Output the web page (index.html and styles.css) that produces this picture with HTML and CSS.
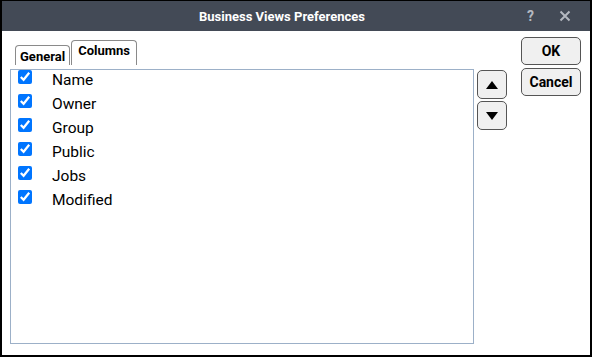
FILE: index.html
```html
<!DOCTYPE html>
<html>
<head>
<meta charset="utf-8">
<link rel="stylesheet" href="styles.css">
</head>
<body>
<div class="dialog">
  <div class="titlebar">
    <div></div>
    <div class="title">Business Views Preferences</div>
    <div class="title-actions">
      <span class="help">?</span>
      <svg class="close" width="12" height="12" viewBox="0 0 12 12"><path d="M1.5 1.5 L10.5 10.5 M10.5 1.5 L1.5 10.5" stroke="#b4b8c0" stroke-width="2" fill="none"/></svg>
    </div>
  </div>
  <div class="body">
    <div class="main">
      <div class="tabs">
        <div class="tab">General</div>
        <div class="tab active">Columns</div>
      </div>
      <div class="list">
        <label class="row"><input type="checkbox" checked><span>Name</span></label>
        <label class="row"><input type="checkbox" checked><span>Owner</span></label>
        <label class="row"><input type="checkbox" checked><span>Group</span></label>
        <label class="row"><input type="checkbox" checked><span>Public</span></label>
        <label class="row"><input type="checkbox" checked><span>Jobs</span></label>
        <label class="row"><input type="checkbox" checked><span>Modified</span></label>
      </div>
    </div>
    <div class="arrows">
      <button class="arrow"><svg width="14" height="10" viewBox="0 0 14 10"><path d="M7 1 L13 9 L1 9 Z" fill="#000"/></svg></button>
      <button class="arrow"><svg width="14" height="10" viewBox="0 0 14 10"><path d="M1 1 L13 1 L7 9 Z" fill="#000"/></svg></button>
    </div>
    <div class="actions">
      <button class="btn">OK</button>
      <button class="btn">Cancel</button>
    </div>
  </div>
</div>
</body>
</html>
```

FILE: styles.css
```css
* { box-sizing: border-box; }
html, body { margin: 0; padding: 0; background: #fff; }
body { font-family: Roboto, "Liberation Sans", Arial, sans-serif; }

.dialog {
  width: 592px;
  height: 357px;
  border: 2px solid #000;
  border-top-width: 1px;
  background: #fff;
  display: flex;
  flex-direction: column;
}

.titlebar {
  height: 30px;
  background: #434a56;
  display: grid;
  grid-template-columns: 1fr auto 1fr;
  align-items: center;
}
.title {
  color: #fff;
  font-weight: bold;
  font-size: 13px;
  padding-top: 1px;
  margin-right: 28px;
}
.title-actions {
  display: flex;
  justify-content: flex-end;
  align-items: center;
  gap: 25px;
  padding-right: 19px;
}
.help {
  color: #b4b8c0;
  font-weight: bold;
  font-size: 14px;
}

.body {
  flex: 1;
  display: flex;
  padding: 0 9px 0 8px;
}

.main {
  width: 464px;
  flex-shrink: 0;
  display: flex;
  flex-direction: column;
}
.tabs {
  display: flex;
  align-items: flex-end;
  padding-top: 9px;
  padding-left: 5px;
  gap: 1px;
  height: 34px;
}
.tab {
  border: 1px solid #8a8a8a;
  border-bottom: none;
  border-radius: 4px 4px 0 0;
  font-size: 13px;
  font-weight: bold;
  color: #000;
  padding: 0 4px;
  height: 20px;
  line-height: 20px;
  padding-top: 1px;
}
.tab.active {
  height: 25px;
  line-height: 20px;
  padding: 0 6px;
}
.list {
  margin-top: 4px;
  height: 275px;
  border: 1px solid #9cb0c8;
  padding: 0 0 0 7px;
}
.row {
  display: flex;
  align-items: flex-start;
  height: 24px;
}
.row input {
  margin: 0;
  width: 14px;
  height: 14px;
  accent-color: #0075ff;
}
.row span {
  margin-left: 20px;
  font-size: 15.5px;
  line-height: 18px;
  padding-top: 1px;
  color: #000;
}

.arrows {
  margin-left: 3px;
  margin-top: 39px;
  flex-shrink: 0;
  display: flex;
  flex-direction: column;
  gap: 2px;
}
.arrow {
  width: 30px;
  height: 29px;
  border: 1px solid #555;
  border-radius: 5px;
  background: #f0f0f0;
  padding: 0;
  display: flex;
  align-items: center;
  justify-content: center;
}

.actions {
  margin-left: 14px;
  margin-top: 6px;
  flex-shrink: 0;
  display: flex;
  flex-direction: column;
  gap: 3px;
}
.btn {
  width: 60px;
  height: 28px;
  border: 1px solid #555;
  border-radius: 5px;
  background: #f0f0f0;
  font-family: Roboto, "Liberation Sans", Arial, sans-serif;
  font-weight: bold;
  font-size: 14px;
  color: #000;
  padding: 0;
}
```
